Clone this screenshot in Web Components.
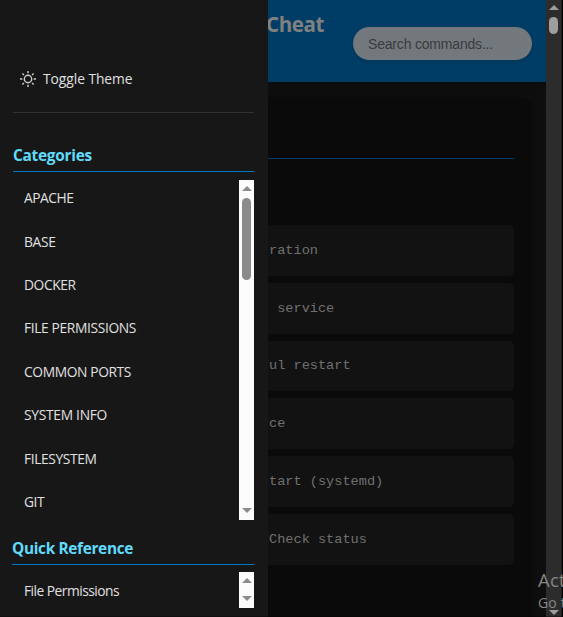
<!DOCTYPE html>
<html lang="en"><head><meta charset="utf-8"><title>Cheat Sheet</title>
<style>
html,body{margin:0;height:100%;overflow:hidden;background:#0f0f0f}
body{font-family:"Open Sans","Noto Sans",sans-serif}
</style></head><body>
<cheat-app></cheat-app>
<script>
const define=(name,html,setup)=>customElements.define(name,class extends HTMLElement{
  connectedCallback(){
    if(this.shadowRoot)return;
    this.attachShadow({mode:'open'}).innerHTML=html;
    if(setup)setup(this,this.shadowRoot);
  }
});
// Single line of text whose tracking is set so that it spans the "w" attribute.
define('fit-text','<style>:host{display:inline-block;white-space:pre}span{display:inline-block}</style><span><slot></slot></span>',(el,r)=>{
  const s=r.querySelector('span'),n=el.textContent.length,w=+el.getAttribute('w');
  s.style.letterSpacing=(w-s.getBoundingClientRect().width)/n+'px';
});
define('sun-icon',`<style>:host{display:block;width:16px;height:16px}svg{display:block}</style>
<svg width="16" height="16" viewBox="0 0 16 16" fill="none" stroke="#cfcfcf" stroke-width="1.4"><circle cx="8" cy="8" r="3.7"/><path d="M8 0v2.3M8 13.7V16M0 8h2.3M13.7 8H16M2.4 2.4l1.5 1.5M12.1 12.1l1.5 1.5M2.4 13.6l1.5-1.5M12.1 3.9l1.5-1.5"/></svg>`);
define('scroll-bar',`<style>
:host{display:flex;flex-direction:column;align-items:center;box-sizing:border-box;width:15px;background:var(--track,#fcfcfc);padding:var(--pad,6px 0 7px)}
svg{display:block;flex:none;fill:var(--thumb,#8b8b8b)}
i{display:block;width:9px;height:var(--len,0);margin-top:var(--gap,0);border-radius:5px;background:var(--thumb,#8b8b8b)}
b{flex:1}</style>
<svg width="10" height="5"><path d="M5 0L10 5H0z"/></svg><i></i><b></b><svg width="10" height="5"><path d="M0 0H10L5 5z"/></svg>`);
define('side-heading',`<style>:host{display:block;box-sizing:border-box;height:27px;border-bottom:1px solid var(--line,#0078c8);color:#61dafb;font-weight:700;font-size:15.4px;line-height:22px}</style><slot></slot>`);
define('side-item',`<style>:host{display:flex;align-items:center;height:43.43px;padding-left:12px;flex:none;box-sizing:border-box;font-size:13.8px;color:#e0e0e0}</style><slot></slot>`);
define('side-list',`<style>:host{display:grid;grid-template-columns:1fr 15px;overflow:hidden}
div{display:flex;flex-direction:column;overflow:hidden;min-height:0}</style><div><slot></slot></div><scroll-bar></scroll-bar>`);
define('side-bar',`<style>
:host{display:block;background:#171717;box-sizing:border-box;padding:45px 14px 0 12px;overflow:hidden}
.theme{display:flex;align-items:center;gap:7px;height:67px;border-bottom:1px solid #303030;margin-left:1px;padding-left:7px;color:#e0e0e0;font-size:13.8px}
.cats{margin:32px 0 0 1px}
.one{height:340px;margin-top:8px;--gap:7px;--len:82px}
.one side-item:first-child{height:35px;margin-bottom:4.4px}
.quick{margin-top:18px}
.two{height:36px;margin-top:7px}
.two side-item{height:36px}
</style>
<div class="theme"><sun-icon></sun-icon><fit-text w="89.5">Toggle Theme</fit-text></div>
<side-heading class="cats"><fit-text w="79">Categories</fit-text></side-heading>
<side-list class="one">
<side-item><fit-text w="49.5">APACHE</fit-text></side-item>
<side-item><fit-text w="31.5">BASE</fit-text></side-item>
<side-item><fit-text w="51.5">DOCKER</fit-text></side-item>
<side-item><fit-text w="112">FILE PERMISSIONS</fit-text></side-item>
<side-item><fit-text w="107">COMMON PORTS</fit-text></side-item>
<side-item><fit-text w="83">SYSTEM INFO</fit-text></side-item>
<side-item><fit-text w="72.5">FILESYSTEM</fit-text></side-item>
<side-item><fit-text w="20">GIT</fit-text></side-item>
</side-list>
<side-heading class="quick"><fit-text w="121">Quick Reference</fit-text></side-heading>
<side-list class="two"><side-item><fit-text w="95">File Permissions</fit-text></side-item></side-list>`);
define('search-field',`<style>:host{display:flex;align-items:center;box-sizing:border-box;width:179px;height:33px;border-radius:17px;background:#73787c;color:#393b3d;padding-left:15px;font:14px "Liberation Sans",Arial,sans-serif;box-shadow:0 2px 5px #0002}</style><slot></slot>`);
define('page-header',`<style>:host{display:flex;justify-content:space-between;align-items:flex-start;height:82px;box-sizing:border-box;padding:0 14px 0 0;background:#003d66;box-shadow:0 2px 10px #0005;position:relative}
h1{margin:10px 0 0 -2px;font-size:20.5px;line-height:29px;color:#808080}search-field{margin-top:27px}</style>
<h1><fit-text w="58">Cheat</fit-text></h1><search-field><fit-text w="125">Search commands...</fit-text></search-field>`);
define('command-row',`<style>:host{display:flex;align-items:center;height:50.8px;background:#121212;border-radius:0 5px 5px 0;color:#707070;font:13.6px "Liberation Mono","Courier New",monospace;white-space:pre;overflow:hidden;padding-left:1px}</style><slot></slot>`);
define('command-card',`<style>:host{display:block;margin:15px 14px 0 0;height:540px;box-sizing:border-box;background:#0a0a0a;border-radius:0 9px 0 0;padding-right:18px;box-shadow:0 3px 12px #0006}
.rule{height:61px;border-bottom:1px solid #003d66}
.rows{display:grid;gap:7px;padding-top:66px}.pull{margin-left:-8.16px}</style>
<div class="rule"></div><div class="rows">
<command-row>ration</command-row><command-row> service</command-row><command-row><span class="pull">ful restart</span></command-row><command-row>ce</command-row><command-row>tart (systemd)</command-row><command-row>Check status</command-row></div>`);
define('cheat-app',`<style>
:host{display:grid;grid-template-columns:268px 278px 15px 2px;height:617px;overflow:hidden;position:relative}
main{overflow:hidden;background:#0f0f0f;min-width:0}
.page{--track:#2c2c2c;--thumb:#9e9e9e;--pad:5px 0 2px;--gap:7px;--len:17px}
.edge{background:#202020;border-right:1px solid #000}
.mark{position:absolute;left:538px;top:567px;color:#858585;white-space:pre;font-size:18.5px;line-height:25px}
.mark small{display:block;font-size:14px;line-height:22px}
.base{position:absolute;left:0;right:0;bottom:0;height:1px;background:#0005}
</style><side-bar></side-bar><main><page-header></page-header><command-card></command-card></main><scroll-bar class="page"></scroll-bar><div class="edge"></div>
<div class="mark"><fit-text w="28">Act</fit-text><small><fit-text w="28">Go t</fit-text></small></div><div class="base"></div>`);
</script></body></html>
